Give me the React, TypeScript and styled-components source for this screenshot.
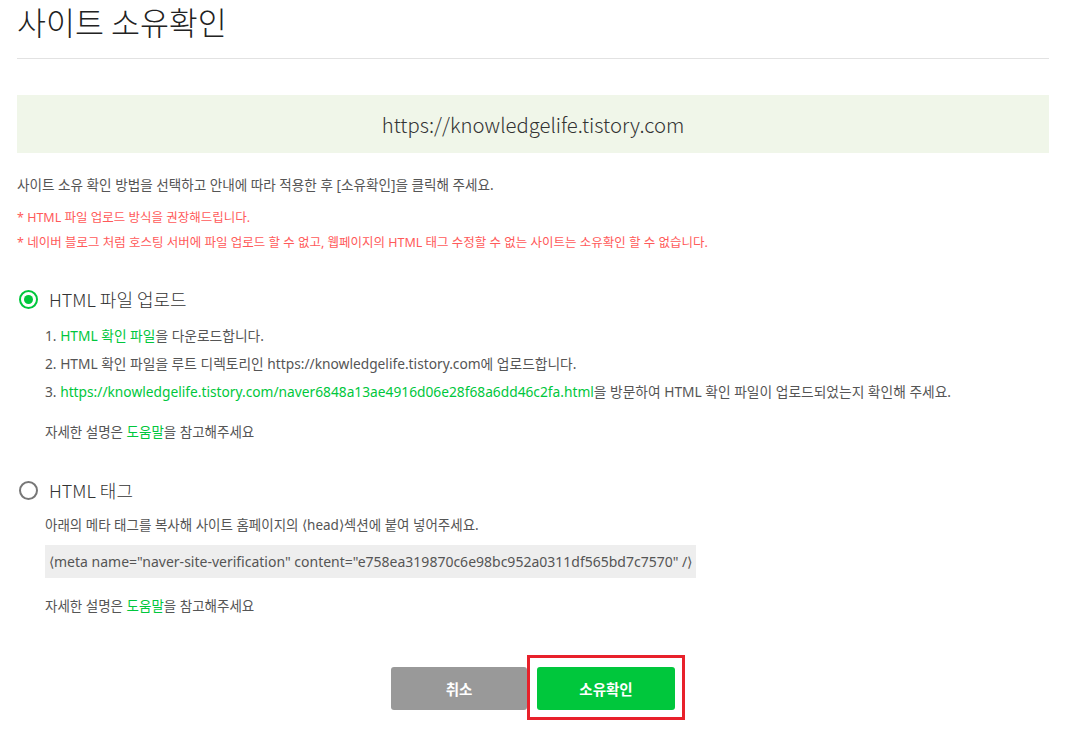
import React from "react";
import styled, { createGlobalStyle } from "styled-components";

const GlobalStyle = createGlobalStyle`
  html, body { margin: 0; padding: 0; background: #fff; }
  body {
    font-family: "Noto Sans", "Noto Sans CJK KR", sans-serif;
    color: #555;
    -webkit-font-smoothing: antialiased;
  }
`;

const Page = styled.div`
  width: 1032px;
  padding: 0 17px 30px;
`;

const Title = styled.h1`
  margin: 0;
  font-family: "Noto Sans CJK KR", sans-serif;
  font-size: 31.5px;
  font-weight: 300;
  line-height: 42px;
  color: #222;
  padding-bottom: 16px;
  border-bottom: 1px solid #e2e2e2;
`;

const UrlBox = styled.div`
  margin-top: 36px;
  height: 58px;
  line-height: 58px;
  background: #f0f6e9;
  text-align: center;
  font-family: "Noto Sans CJK KR", sans-serif;
  font-size: 20.3px;
  font-weight: 300;
  color: #333;
`;

const Desc = styled.p`
  margin: 22px 0 0;
  font-size: 13.6px;
  line-height: 20px;
  color: #555;
`;

const Notice = styled.ul`
  list-style: none;
  margin: 10px 0 0;
  padding: 0;
  font-size: 12.5px;
  line-height: 25px;
  color: #ff5a5a;
`;

const Option = styled.section<{ $gap: number }>`
  margin-top: ${(p) => p.$gap}px;
`;

const OptionHead = styled.label`
  display: flex;
  align-items: center;
  gap: 11px;
  height: 24px;
  font-family: "Noto Sans CJK KR", sans-serif;
  font-size: 18px;
  font-weight: 300;
  color: #333;
  padding-left: 2px;
`;

const Radio = styled.span<{ $checked?: boolean }>`
  box-sizing: border-box;
  width: 19px;
  height: 19px;
  border-radius: 50%;
  border: 2px solid ${(p) => (p.$checked ? "#00c73c" : "#777")};
  display: flex;
  align-items: center;
  justify-content: center;
  &::after {
    content: "";
    display: ${(p) => (p.$checked ? "block" : "none")};
    width: 9px;
    height: 9px;
    border-radius: 50%;
    background: #00c73c;
  }
`;

const Steps = styled.ol`
  list-style: none;
  margin: 11px 0 0;
  padding: 0 0 0 28px;
  font-size: 13.75px;
  line-height: 28px;
  color: #555;
`;

const Body = styled.p<{ $gap: number }>`
  margin: ${(p) => p.$gap}px 0 0;
  padding-left: 28px;
  font-size: 13.5px;
  line-height: 20px;
  color: #555;
`;

const Link = styled.a`
  color: #00c73c;
  text-decoration: none;
`;

const CodeWrap = styled.div`
  margin-top: 10px;
  padding-left: 28px;
`;

const Code = styled.div`
  display: inline-block;
  height: 33px;
  line-height: 33px;
  padding: 0 4px;
  background: #eeeeee;
  font-size: 14px;
  color: #555;
`;

const Buttons = styled.div`
  margin-top: 51px;
  display: flex;
  justify-content: center;
  gap: 10px;
`;

const Button = styled.button<{ $primary?: boolean; $marked?: boolean }>`
  position: relative;
  width: ${(p) => (p.$primary ? 138 : 136)}px;
  height: 43px;
  border: 0;
  border-radius: 3px;
  background: ${(p) => (p.$primary ? "#00c73c" : "#999")};
  color: #fff;
  font-family: "Noto Sans CJK KR", sans-serif;
  font-size: 14.5px;
  font-weight: 700;
  cursor: pointer;
  overflow: visible;
  &::after {
    content: "";
    display: ${(p) => (p.$marked ? "block" : "none")};
    position: absolute;
    left: -10px;
    right: -10px;
    top: -12px;
    bottom: -10px;
    border: 3px solid #e8212b;
    box-sizing: border-box;
  }
`;

export default function App() {
  const site = "https://knowledgelife.tistory.com";
  return (
    <>
      <GlobalStyle />
      <Page>
        <Title>사이트 소유확인</Title>
        <UrlBox>{site}</UrlBox>
        <Desc>사이트 소유 확인 방법을 선택하고 안내에 따라 적용한 후 [소유확인]을 클릭해 주세요.</Desc>
        <Notice>
          <li>* HTML 파일 업로드 방식을 권장해드립니다.</li>
          <li>
            * 네이버 블로그 처럼 호스팅 서버에 파일 업로드 할 수 없고, 웹페이지의 HTML 태그 수정할 수 없는 사이트는 소유확인 할 수 없습니다.
          </li>
        </Notice>

        <Option $gap={32}>
          <OptionHead>
            <Radio $checked />
            HTML 파일 업로드
          </OptionHead>
          <Steps>
            <li>
              1. <Link href="#">HTML 확인 파일</Link>을 다운로드합니다.
            </li>
            <li>2. HTML 확인 파일을 루트 디렉토리인 {site}에 업로드합니다.</li>
            <li>
              3. <Link href="#">{site}/naver6848a13ae4916d06e28f68a6dd46c2fa.html</Link>을 방문하여 HTML 확인 파일이
              업로드되었는지 확인해 주세요.
            </li>
          </Steps>
          <Body $gap={16}>
            자세한 설명은 <Link href="#">도움말</Link>을 참고해주세요
          </Body>
        </Option>

        <Option $gap={36}>
          <OptionHead>
            <Radio />
            HTML 태그
          </OptionHead>
          <Body $gap={13}>아래의 메타 태그를 복사해 사이트 홈페이지의 ⟨head⟩섹션에 붙여 넣어주세요.</Body>
          <CodeWrap>
            <Code>
              {'⟨meta name="naver-site-verification" content="e758ea319870c6e98bc952a0311df565bd7c7570" /⟩'}
            </Code>
          </CodeWrap>
          <Body $gap={18}>
            자세한 설명은 <Link href="#">도움말</Link>을 참고해주세요
          </Body>
        </Option>

        <Buttons>
          <Button>취소</Button>
          <Button $primary $marked>
            소유확인
          </Button>
        </Buttons>
      </Page>
    </>
  );
}
